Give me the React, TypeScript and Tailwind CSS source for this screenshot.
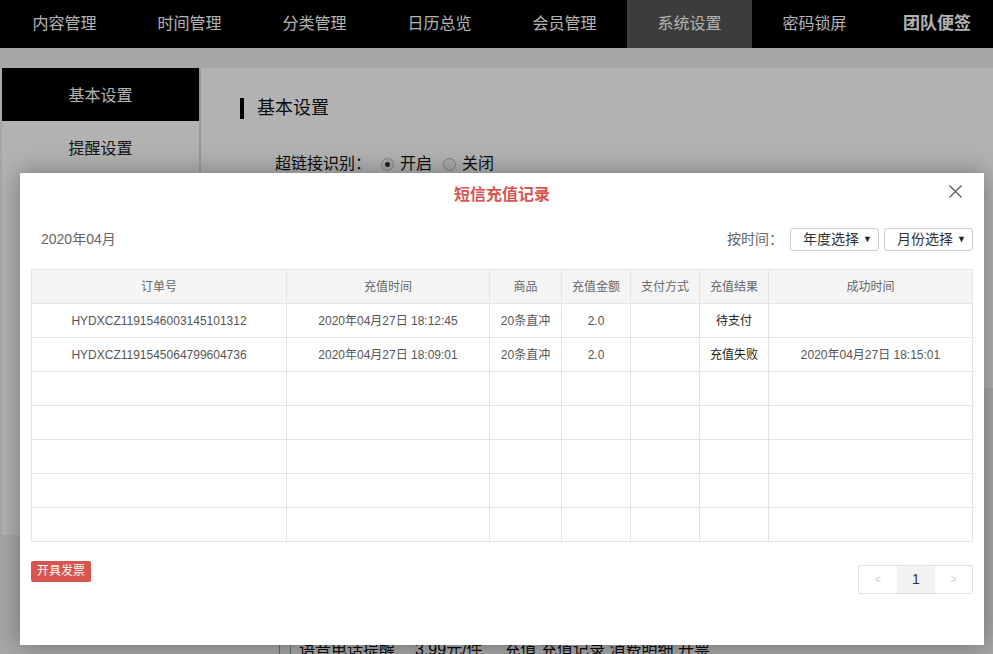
import React from 'react';

const NAV = ['内容管理', '时间管理', '分类管理', '日历总览', '会员管理', '系统设置', '密码锁屏'];

const COLS = [
    { title: '订单号', w: 'w-[255px]' },
    { title: '充值时间', w: 'w-[203px]' },
    { title: '商品', w: 'w-[72px]' },
    { title: '充值金额', w: 'w-[69px]' },
    { title: '支付方式', w: 'w-[69px]' },
    { title: '充值结果', w: 'w-[69px]' },
    { title: '成功时间', w: 'w-[204px]' },
];

const RECORDS = [
    { order: 'HYDXCZ1191546003145101312', time: '2020年04月27日 18:12:45', goods: '20条直冲', amount: '2.0', pay: '', result: '待支付', done: '' },
    { order: 'HYDXCZ1191545064799604736', time: '2020年04月27日 18:09:01', goods: '20条直冲', amount: '2.0', pay: '', result: '充值失败', done: '2020年04月27日 18:15:01' },
];

const EMPTY_ROWS = 5;

function Radio({ checked }: { checked?: boolean }) {
    return (
        <span className="inline-flex w-[13px] h-[13px] rounded-full border border-[#b8b8b8] bg-[#f4f4f4] items-center justify-center">
            {checked && <span className="w-[5px] h-[5px] rounded-full bg-[#333]" />}
        </span>
    );
}

function Select({ label }: { label: string }) {
    return (
        <div className="w-[89px] h-[23px] border border-[#ccc] rounded-[3px] bg-white flex items-center pl-[12px] pr-[6px] text-[14px] text-[#333]">
            <span className="flex-1">{label}</span>
            <span className="text-[9px] text-[#222]">▼</span>
        </div>
    );
}

export default function App() {
    return (
        <div className="relative w-[993px] h-[654px] overflow-hidden bg-[#f0f0f0] [font-family:'Liberation_Sans','Noto_Sans_CJK_SC',sans-serif]">
            {/* Top navigation */}
            <nav className="h-[48px] bg-black flex pl-[2px] text-[16px] text-white">
                {NAV.map(item => (
                    <div
                        key={item}
                        className={`w-[125px] flex items-center justify-center ${item === '系统设置' ? 'bg-[#575757]' : ''}`}
                    >
                        {item}
                    </div>
                ))}
                <div className="flex-1 flex items-center justify-end pr-[22px] font-bold text-[17px]">团队便签</div>
            </nav>

            {/* Settings page behind the dialog */}
            <div className="flex pt-[20px] pl-[2px]">
                <aside className="w-[199px] h-[467px] bg-white border-r-2 border-[#dcdcdc] text-[16px] text-[#222]">
                    <div className="h-[53px] bg-black text-white flex items-center justify-center pt-[2px]">基本设置</div>
                    <div className="h-[53px] flex items-center justify-center pt-[2px]">提醒设置</div>
                </aside>
                <div className="flex-1">
                    <section className="h-[320px] bg-white pl-[39px] pt-[27px]">
                        <h2 className="flex items-center gap-[13px] text-[18px] text-[#111]">
                            <span className="w-[4px] h-[21px] bg-black" />
                            基本设置
                        </h2>
                        <div className="mt-[30px] ml-[35px] flex items-center text-[16px] text-[#111]">
                            <span className="mr-[10px]">超链接识别：</span>
                            <Radio checked />
                            <span className="ml-[6px] mr-[11px]">开启</span>
                            <Radio />
                            <span className="ml-[6px]">关闭</span>
                        </div>
                    </section>
                    <div className="mt-[250px] ml-[78px] flex items-center gap-[8px] text-[16px] text-[#111]">
                        <span className="inline-block w-[12px] h-[12px] shrink-0 rounded-[2px] border border-[#999] bg-[#eee]" />
                        <span>语音电话提醒</span>
                        <span className="ml-[12px]">3.99元/件</span>
                        <span className="ml-[14px]">充值 充值记录 消费明细 开票</span>
                    </div>
                </div>
            </div>

            {/* Overlay */}
            <div className="absolute inset-0 bg-black/30" />

            {/* Dialog */}
            <div className="absolute left-[20px] top-[173px] w-[964px] h-[472px] bg-white shadow-[0_0_24px_rgba(0,0,0,0.35)] px-[11px]">
                <div className="relative h-[44px] flex items-center justify-center">
                    <h3 className="text-[16px] font-bold text-[#d9534f]">短信充值记录</h3>
                    <button className="absolute right-[10px] top-[11px] w-[15px] h-[15px] text-[#555]">
                        <svg viewBox="0 0 15 15" className="w-[15px] h-[15px]" fill="none" stroke="currentColor" strokeWidth="1.2">
                            <path d="M1.5 1.5l12 12M13.5 1.5l-12 12" />
                        </svg>
                    </button>
                </div>

                <div className="mt-[11px] h-[23px] flex items-center">
                    <span className="pl-[10px] text-[14px] text-[#666]">2020年04月</span>
                    <div className="ml-auto flex items-center gap-[5px] text-[14px] text-[#666]">
                        <span className="mr-[2px]">按时间：</span>
                        <Select label="年度选择" />
                        <Select label="月份选择" />
                    </div>
                </div>

                <table className="mt-[18px] w-[941px] table-fixed border-collapse text-[12px] text-[#555]">
                    <thead>
                        <tr className="h-[34px] bg-[#f5f5f5]">
                            {COLS.map(col => (
                                <th key={col.title} className={`${col.w} border border-[#e4e4e4] font-normal text-[#666]`}>
                                    {col.title}
                                </th>
                            ))}
                        </tr>
                    </thead>
                    <tbody>
                        {RECORDS.map(r => (
                            <tr key={r.order} className="h-[34px] text-center">
                                <td className="border border-[#e4e4e4]">{r.order}</td>
                                <td className="border border-[#e4e4e4]">{r.time}</td>
                                <td className="border border-[#e4e4e4]">{r.goods}</td>
                                <td className="border border-[#e4e4e4]">{r.amount}</td>
                                <td className="border border-[#e4e4e4]">{r.pay}</td>
                                <td className="border border-[#e4e4e4] text-[#222]">{r.result}</td>
                                <td className="border border-[#e4e4e4]">{r.done}</td>
                            </tr>
                        ))}
                        {Array.from({ length: EMPTY_ROWS }).map((_, i) => (
                            <tr key={`empty-${i}`} className="h-[34px]">
                                {COLS.map(col => (
                                    <td key={col.title} className="border border-[#e4e4e4]" />
                                ))}
                            </tr>
                        ))}
                    </tbody>
                </table>

                <div className="mt-[19px] flex items-start justify-between">
                    <button className="h-[21px] px-[6px] rounded-[2px] bg-[#d9534f] text-white text-[12px] leading-[21px]">
                        开具发票
                    </button>
                    <div className="mt-[4px] flex h-[29px] border border-[#e2e2e2] rounded-[2px] text-[14px]">
                        <span className="w-[38px] flex items-center justify-center text-[10px] text-[#c8c8c8]">&lt;</span>
                        <span className="w-[38px] flex items-center justify-center bg-[#f2f2f2] text-[#333]">1</span>
                        <span className="w-[37px] flex items-center justify-center text-[10px] text-[#c8c8c8]">&gt;</span>
                    </div>
                </div>
            </div>
        </div>
    );
}
